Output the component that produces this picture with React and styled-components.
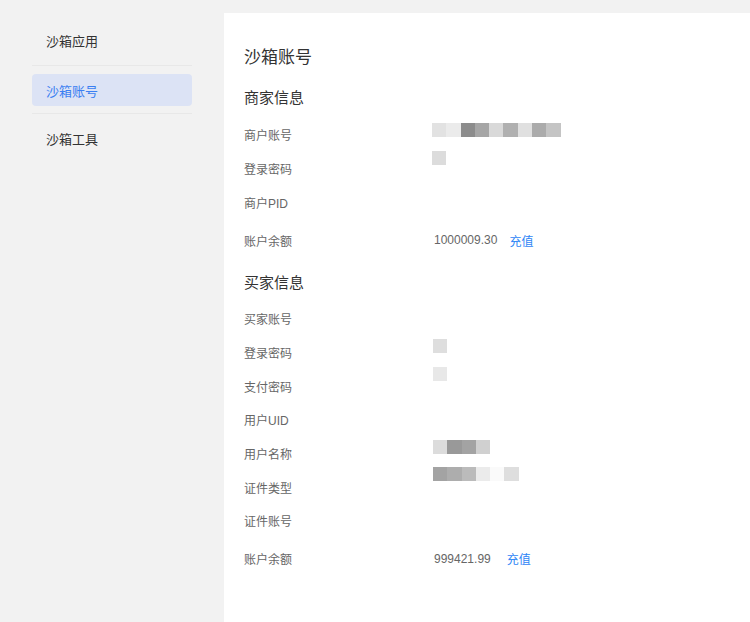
import React from "react";
import styled, { createGlobalStyle } from "styled-components";

const GlobalStyle = createGlobalStyle`
  html, body {
    margin: 0;
    padding: 0;
    background: #f2f2f2;
  }
  body {
    font-family: "Helvetica Neue", "Liberation Sans", "Noto Sans CJK SC", sans-serif;
    color: #333;
  }
`;

const Page = styled.div`
  display: flex;
  width: 750px;
  height: 622px;
  overflow: hidden;
  background: #f2f2f2;
`;

const Sidebar = styled.nav`
  width: 224px;
  flex-shrink: 0;
  padding: 18px 32px 0 32px;
  box-sizing: border-box;
  display: flex;
  flex-direction: column;
`;

const MenuSlot = styled.div`
  height: ${(p) => (p.first ? 48 : 48)}px;
  padding: ${(p) => (p.first ? "6px 0 10px" : "8px 0")};
  box-sizing: border-box;
  border-bottom: ${(p) => (p.last ? "none" : "1px solid #e8e8e8")};
`;

const MenuItem = styled.div`
  height: 32px;
  display: flex;
  align-items: center;
  padding-left: 14px;
  border-radius: 4px;
  font-size: 13px;
  color: ${(p) => (p.active ? "#3b7ff2" : "#333")};
  background: ${(p) => (p.active ? "#dce3f5" : "transparent")};
`;

const Panel = styled.main`
  flex: 1;
  margin-top: 13px;
  background: #fff;
  padding: 33px 20px 0 20px;
  box-sizing: border-box;
`;

const Title = styled.h1`
  margin: 0;
  font-size: 17px;
  line-height: 24px;
  font-weight: 400;
  color: #333;
`;

const SectionTitle = styled.h2`
  margin: ${(p) => (p.first ? "17px" : "15px")} 0 8px 0;
  font-size: 15px;
  line-height: 22px;
  font-weight: 400;
  color: #333;
`;

const Row = styled.div`
  display: flex;
  align-items: center;
  height: ${(p) => p.h || 34}px;
  margin-top: ${(p) => (p.spaced ? 4 : 0)}px;
`;

const Label = styled.div`
  width: 188px;
  font-size: 12px;
  color: #666;
  flex-shrink: 0;
`;

const Value = styled.div`
  display: flex;
  align-items: center;
  align-self: stretch;
  font-size: 12px;
  color: #666;
  padding-left: ${(p) => p.pad || 0}px;
`;

const Mosaic = styled.div`
  display: flex;
  align-self: flex-start;
  margin-top: ${(p) => p.offset}px;
`;

const Pixel = styled.span`
  width: 14.3px;
  height: 14px;
  background: ${(p) => p.c};
`;

const Link = styled.span`
  color: #2f86f6;
  margin-left: ${(p) => p.gap}px;
`;

const Blur = ({ colors, offset }) => (
  <Mosaic offset={offset}>
    {colors.map((c, i) => (
      <Pixel key={i} c={c} />
    ))}
  </Mosaic>
);

const merchant = [
  { label: "商户账号", mosaic: ["#e2e2e2", "#ebebeb", "#8c8c8c", "#a6a6a6", "#d9d9d9", "#b0b0b0", "#e0e0e0", "#ababab", "#c4c4c4"], offset: 6 },
  { label: "登录密码", mosaic: ["#dcdcdc"], offset: 0 },
  { label: "商户PID" },
];

const buyer = [
  { label: "买家账号" },
  { label: "登录密码", mosaic: ["#dedede"], offset: 3, pad: 1 },
  { label: "支付密码", mosaic: ["#e8e8e8"], offset: -2, pad: 1 },
  { label: "用户UID" },
  { label: "用户名称", mosaic: ["#dcdcdc", "#999999", "#a3a3a3", "#d0d0d0"], offset: 3, pad: 1 },
  { label: "证件类型", mosaic: ["#a3a3a3", "#adadad", "#bbbbbb", "#ebebeb", "#fafafa", "#dedede"], offset: -3, pad: 1 },
  { label: "证件账号" },
];

const renderRows = (rows, h) =>
  rows.map((r, i) => (
    <Row key={i} h={h}>
      <Label>{r.label}</Label>
      <Value pad={r.pad}>{r.mosaic && <Blur colors={r.mosaic} offset={r.offset} />}</Value>
    </Row>
  ));

export default function App() {
  return (
    <>
      <GlobalStyle />
      <Page>
        <Sidebar>
          <MenuSlot first>
            <MenuItem>沙箱应用</MenuItem>
          </MenuSlot>
          <MenuSlot>
            <MenuItem active>沙箱账号</MenuItem>
          </MenuSlot>
          <MenuSlot last>
            <MenuItem>沙箱工具</MenuItem>
          </MenuSlot>
        </Sidebar>
        <Panel>
          <Title>沙箱账号</Title>

          <SectionTitle first>商家信息</SectionTitle>
          {renderRows(merchant, 34)}
          <Row spaced>
            <Label>账户余额</Label>
            <Value pad={2}>
              1000009.30
              <Link gap={12}>充值</Link>
            </Value>
          </Row>

          <SectionTitle>买家信息</SectionTitle>
          {renderRows(buyer, 33.7)}
          <Row spaced>
            <Label>账户余额</Label>
            <Value pad={2}>
              999421.99
              <Link gap={16}>充值</Link>
            </Value>
          </Row>
        </Panel>
      </Page>
    </>
  );
}
